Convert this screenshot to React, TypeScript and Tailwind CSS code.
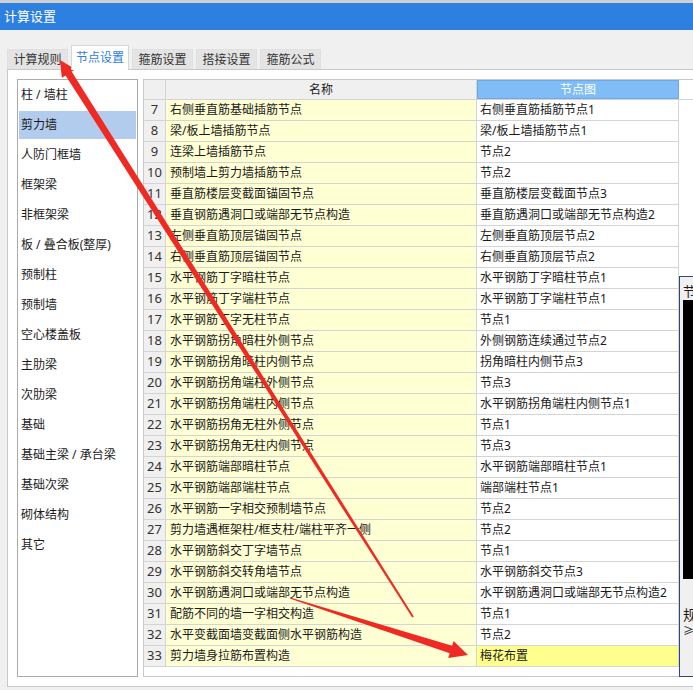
import React from 'react';

const categories = [
  '柱 / 墙柱',
  '剪力墙',
  '人防门框墙',
  '框架梁',
  '非框架梁',
  '板 / 叠合板(整厚)',
  '预制柱',
  '预制墙',
  '空心楼盖板',
  '主肋梁',
  '次肋梁',
  '基础',
  '基础主梁 / 承台梁',
  '基础次梁',
  '砌体结构',
  '其它',
];

const rows: [number, string, string][] = [
  [7, '右侧垂直筋基础插筋节点', '右侧垂直筋插筋节点1'],
  [8, '梁/板上墙插筋节点', '梁/板上墙插筋节点1'],
  [9, '连梁上墙插筋节点', '节点2'],
  [10, '预制墙上剪力墙插筋节点', '节点2'],
  [11, '垂直筋楼层变截面锚固节点', '垂直筋楼层变截面节点3'],
  [12, '垂直钢筋遇洞口或端部无节点构造', '垂直筋遇洞口或端部无节点构造2'],
  [13, '左侧垂直筋顶层锚固节点', '左侧垂直筋顶层节点2'],
  [14, '右侧垂直筋顶层锚固节点', '右侧垂直筋顶层节点2'],
  [15, '水平钢筋丁字暗柱节点', '水平钢筋丁字暗柱节点1'],
  [16, '水平钢筋丁字端柱节点', '水平钢筋丁字端柱节点1'],
  [17, '水平钢筋丁字无柱节点', '节点1'],
  [18, '水平钢筋拐角暗柱外侧节点', '外侧钢筋连续通过节点2'],
  [19, '水平钢筋拐角暗柱内侧节点', '拐角暗柱内侧节点3'],
  [20, '水平钢筋拐角端柱外侧节点', '节点3'],
  [21, '水平钢筋拐角端柱内侧节点', '水平钢筋拐角端柱内侧节点1'],
  [22, '水平钢筋拐角无柱外侧节点', '节点1'],
  [23, '水平钢筋拐角无柱内侧节点', '节点3'],
  [24, '水平钢筋端部暗柱节点', '水平钢筋端部暗柱节点1'],
  [25, '水平钢筋端部端柱节点', '端部端柱节点1'],
  [26, '水平钢筋一字相交预制墙节点', '节点2'],
  [27, '剪力墙遇框架柱/框支柱/端柱平齐一侧', '节点2'],
  [28, '水平钢筋斜交丁字墙节点', '节点1'],
  [29, '水平钢筋斜交转角墙节点', '水平钢筋斜交节点3'],
  [30, '水平钢筋遇洞口或端部无节点构造', '水平钢筋遇洞口或端部无节点构造2'],
  [31, '配筋不同的墙一字相交构造', '节点1'],
  [32, '水平变截面墙变截面侧水平钢筋构造', '节点2'],
  [33, '剪力墙身拉筋布置构造', '梅花布置'],
];

const tabs = ['计算规则', '节点设置', '箍筋设置', '搭接设置', '箍筋公式'];

const App = () => {
  return (
    <div className="relative w-[693px] h-[690px] overflow-hidden bg-[#f0f0f0] text-[12px] text-[#1a1a1a] font-['Noto_Sans','Noto_Sans_CJK_SC',sans-serif]">
      <div className="h-[3px] bg-[#cfcfcf]" />
      <div className="h-[27px] bg-[#2d80e0] text-white text-[13px] flex items-center pl-[4px]">计算设置</div>

      {/* tabs */}
      <div className="flex items-end h-[24px] mt-[15px] pl-[7px] gap-[3px]">
        {tabs.map((t, i) =>
          i === 1 ? (
            <div
              key={t}
              className="relative z-10 -mb-px h-[25px] w-[58px] bg-white border border-b-0 border-[#d6d6d6] text-[#2d80e0] flex items-center justify-center"
            >
              {t}
            </div>
          ) : (
            <div
              key={t}
              className="h-[20px] w-[61px] bg-[#e4e4e4] border border-b-0 border-[#e0e0e0] text-[#333] flex items-center justify-center"
            >
              {t}
            </div>
          )
        )}
      </div>

      {/* panel */}
      <div className="ml-[7px] flex h-[618px] w-[740px] border border-[#c8c8c8] bg-white pl-[9px] pt-[9px]">
        <div className="w-[121px] h-[598px] border border-[#ababab] p-[1px] shrink-0">
          {categories.map((c, i) => (
            <div
              key={c}
              className={`h-[28px] mb-[2px] flex items-center pl-[2px] whitespace-nowrap ${i === 1 ? 'bg-[#b1cced]' : ''}`}
            >
              {c}
            </div>
          ))}
        </div>

        <div className="ml-[5px] h-[598px] flex-1 border border-[#c8c8c8]">
          <div className="flex h-[20px] border-b border-[#d4d4d4]">
            <div className="w-[22px] bg-[#f0f0f0] border-r border-[#d4d4d4]" />
            <div className="w-[311px] bg-[#f0f0f0] border-r border-[#d4d4d4] flex items-center justify-center text-[#222]">名称</div>
            <div className="w-[202px] bg-[#80bcf6] border border-[#6ca8e8] text-white flex items-center justify-center">节点图</div>
          </div>
          {rows.map(([n, name, val]) => (
            <div key={n} className="flex h-[21px]">
              <div className="w-[22px] bg-[#f0f0f0] border-r border-b border-[#d4d4d4] flex items-center justify-center text-[13px] text-[#333]">
                {n}
              </div>
              <div className="w-[311px] bg-[#ffffd4] border-r border-b border-[#d4d4d4] flex items-center pl-[4px] whitespace-nowrap">
                {name}
              </div>
              <div
                className={`w-[202px] border-r border-b border-[#d4d4d4] flex items-center pl-[3px] whitespace-nowrap ${n === 33 ? 'bg-[#ffff8c]' : 'bg-white'}`}
              >
                {val}
              </div>
            </div>
          ))}
        </div>
      </div>

      {/* floating preview window on the right */}
      <div className="absolute left-[679px] top-[276px] w-[30px] h-[401px] overflow-hidden border border-[#2b4a7a] bg-[#f0f0f0] pl-[3px] pt-[5px] whitespace-nowrap">
        <div className="h-[18px] leading-[18px] text-[13px]">节点图</div>
        <div className="h-[279px] bg-black" />
        <div className="mt-[27px] text-[14px] leading-[18px]">规则</div>
        <div className="text-[11px] leading-[14px]">≥0</div>
      </div>

      {/* red arrows */}
      <svg className="absolute inset-0 pointer-events-none" width="693" height="690" viewBox="0 0 693 690">
        <polygon
          fill="#ee2a22"
          points="413.8,616.5 71.6,71.6 75.4,69.2 60,60 61.8,77.8 65.6,75.4 412.2,617.5"
        />
        <polygon
          fill="#ee2a22"
          points="289.8,598.5 449.7,653.3 448.2,658.1 468,655 453.6,640.9 452.1,645.7 290.2,597.5"
        />
      </svg>
    </div>
  );
};

export default App;
